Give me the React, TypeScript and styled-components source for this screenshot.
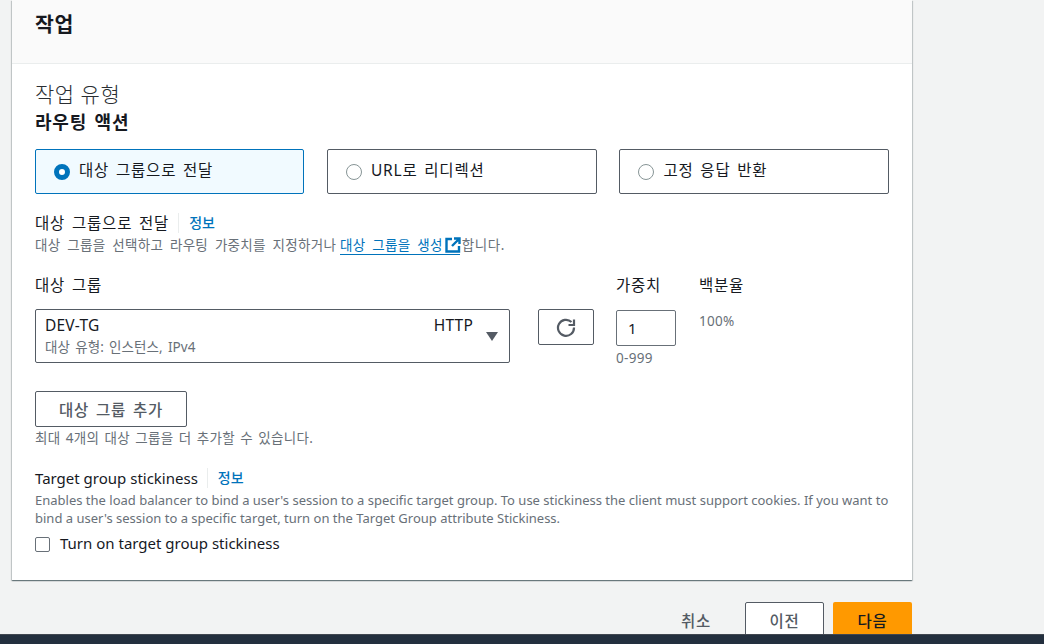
import React from "react";
import styled, { createGlobalStyle } from "styled-components";

const FONT = `"Noto Sans", "Noto Sans CJK KR", sans-serif`;

const GlobalStyle = createGlobalStyle`
  html, body {
    margin: 0;
    height: 100%;
    overflow: hidden;
    background: #f2f3f3;
  }
  * {
    box-sizing: border-box;
  }
  body {
    font-family: ${FONT};
    font-size: 15.5px;
    letter-spacing: 0.8px;
    word-spacing: 2px;
    color: #16191f;
  }
`;

const ExternalIcon = () => (
  <svg width="16" height="16" viewBox="0 0 16 16" fill="none" stroke="#0073bb" strokeWidth="2.4">
    <path d="M7 2H1.5v12.5H14V9" />
    <path d="M9 1.5h5.5V7M14.5 1.5 7 9" />
  </svg>
);

const RefreshIcon = () => (
  <svg width="20" height="20" viewBox="0 0 20 20" fill="none" stroke="#545b64" strokeWidth="2.2">
    <path d="M15.5 5A8 8 0 1 0 18 10.5" />
    <path d="M18 2.5V8h-5.5" />
  </svg>
);

const Info: React.FC = () => <InfoLink>정보</InfoLink>;

const App: React.FC = () => {
  return (
    <>
      <GlobalStyle />
      <Page>
        <Card>
          <CardHeader>
            <h2>작업</h2>
          </CardHeader>
          <CardBody>
            <SectionTitle>작업 유형</SectionTitle>
            <SubTitle>라우팅 액션</SubTitle>

            <Tiles>
              <Tile selected>
                <Radio selected />
                대상 그룹으로 전달
              </Tile>
              <Tile>
                <Radio />
                URL로 리디렉션
              </Tile>
              <Tile>
                <Radio />
                고정 응답 반환
              </Tile>
            </Tiles>

            <FieldLabel>
              대상 그룹으로 전달
              <Info />
            </FieldLabel>
            <Description>
              대상 그룹을 선택하고 라우팅 가중치를 지정하거나{" "}
              <ExternalLink>
                대상 그룹을 생성
                <ExternalIcon />
              </ExternalLink>
              <LinkTail>합니다.</LinkTail>
            </Description>

            <GroupGrid>
              <GroupColumn>
                <ColumnLabel>대상 그룹</ColumnLabel>
                <Select>
                  <SelectText>
                    <SelectRow>
                      <span>DEV-TG</span>
                      <span>HTTP</span>
                    </SelectRow>
                    <SelectHint>대상 유형: 인스턴스, IPv4</SelectHint>
                  </SelectText>
                  <Caret />
                </Select>
              </GroupColumn>
              <RefreshButton>
                <RefreshIcon />
              </RefreshButton>
              <WeightColumn>
                <ColumnLabel>가중치</ColumnLabel>
                <WeightInput>1</WeightInput>
                <WeightRange>0-999</WeightRange>
              </WeightColumn>
              <PercentColumn>
                <ColumnLabel>백분율</ColumnLabel>
                <PercentValue>100%</PercentValue>
              </PercentColumn>
            </GroupGrid>

            <AddButton>대상 그룹 추가</AddButton>
            <Hint>최대 4개의 대상 그룹을 더 추가할 수 있습니다.</Hint>

            <StickyLabel>
              <span>Target group stickiness</span>
              <Info />
            </StickyLabel>
            <StickyDescription>
              Enables the load balancer to bind a user's session to a specific target group. To use
              stickiness the client must support cookies. If you want to bind a user's session to a
              specific target, turn on the Target Group attribute Stickiness.
            </StickyDescription>
            <CheckRow>
              <CheckBox />
              Turn on target group stickiness
            </CheckRow>
          </CardBody>
        </Card>

        <Actions>
          <CancelButton>취소</CancelButton>
          <PrevButton>이전</PrevButton>
          <NextButton>다음</NextButton>
        </Actions>
        <BottomBar />
      </Page>
    </>
  );
};

const Page = styled.div`
  position: relative;
  height: 644px;
  overflow: hidden;
  padding-left: 12px;
`;

const Card = styled.section`
  width: 900px;
  background: #fff;
  box-shadow: 0 1px 1px 0 rgba(0, 28, 36, 0.4), 1px 1px 1px 0 rgba(0, 28, 36, 0.15),
    -1px 1px 1px 0 rgba(0, 28, 36, 0.15);
`;

const CardHeader = styled.header`
  height: 64px;
  padding: 9px 23px 0;
  background: #fafafa;
  border-bottom: 1px solid #eaeded;
  h2 {
    margin: 0;
    font-size: 20.5px;
    letter-spacing: 0.6px;
    line-height: 30px;
    font-weight: 700;
  }
`;

const CardBody = styled.div`
  padding: 16px 23px 20px;
  height: 516px;
`;

const SectionTitle = styled.div`
  font-size: 21px;
  letter-spacing: 0.5px;
  word-spacing: 0;
  line-height: 28px;
  font-weight: 300;
  color: #2a2e33;
`;

const SubTitle = styled.div`
  font-size: 18px;
  letter-spacing: 0.8px;
  line-height: 30px;
  font-weight: 700;
  margin-top: -1px;
`;

const Tiles = styled.div`
  display: grid;
  grid-template-columns: 269.4px 270px 270px;
  column-gap: 22.5px;
  margin-top: 12px;
`;

const Tile = styled.div<{ selected?: boolean }>`
  display: flex;
  align-items: center;
  gap: 9px;
  height: 45px;
  padding: 0 18px 4px;
  border: 1px solid ${(p) => (p.selected ? "#0073bb" : "#545b64")};
  border-radius: 2px;
  background: ${(p) => (p.selected ? "#f1faff" : "#fff")};
  line-height: 20px;
`;

const Radio = styled.span<{ selected?: boolean }>`
  flex: none;
  width: 16px;
  height: 16px;
  margin-top: 4px;
  border-radius: 50%;
  background: #fff;
  border: ${(p) => (p.selected ? "5px solid #0073bb" : "1px solid #879596")};
`;

const FieldLabel = styled.div`
  display: flex;
  align-items: center;
  margin-top: 19px;
  line-height: 20px;
`;

const InfoLink = styled.a`
  margin-left: 9px;
  padding-left: 10px;
  border-left: 1px solid #eaeded;
  font-size: 14px;
  letter-spacing: 0;
  line-height: 20px;
  font-weight: 500;
  color: #0073bb;
`;

const Description = styled.div`
  margin-top: 3px;
  font-size: 13.5px;
  letter-spacing: 0.3px;
  word-spacing: 3px;
  line-height: 18px;
  color: #687078;
`;

const ExternalLink = styled.a`
  display: inline-flex;
  align-items: center;
  height: 19px;
  margin-left: -3px;
  border-bottom: 1px solid #0073bb;
  color: #0073bb;
  svg {
    margin-left: 2px;
    margin-bottom: 1px;
    margin-right: -1px;
  }
`;

const LinkTail = styled.span`
  margin-left: 2px;
  letter-spacing: 0.6px;
`;

const GroupGrid = styled.div`
  display: flex;
  align-items: flex-start;
  margin-top: 20px;
`;

const GroupColumn = styled.div`
  width: 475px;
`;

const ColumnLabel = styled.div`
  line-height: 20px;
  margin-bottom: 14px;
`;

const Select = styled.div`
  display: flex;
  align-items: center;
  height: 54px;
  padding: 0 11px 0 9px;
  border: 1px solid #545b64;
  border-radius: 2px;
`;

const SelectText = styled.div`
  flex: 1;
  min-width: 0;
`;

const SelectRow = styled.div`
  display: flex;
  justify-content: space-between;
  padding-right: 7px;
  font-size: 15.5px;
  letter-spacing: 0.2px;
  line-height: 20px;
`;

const SelectHint = styled.div`
  margin-top: 2px;
  font-size: 13.5px;
  letter-spacing: 0.1px;
  word-spacing: 1.5px;
  line-height: 20px;
  color: #687078;
`;

const Caret = styled.span`
  flex: none;
  width: 0;
  height: 0;
  border-left: 6px solid transparent;
  border-right: 6px solid transparent;
  border-top: 9px solid #545b64;
  margin-left: 6px;
`;

const RefreshButton = styled.button`
  display: flex;
  align-items: center;
  justify-content: center;
  width: 56px;
  height: 36px;
  margin: 34px 0 0 28px;
  padding: 0;
  border: 1px solid #545b64;
  border-radius: 2px;
  background: #fff;
`;

const WeightColumn = styled.div`
  width: 60px;
  margin-left: 22px;
`;

const WeightInput = styled.div`
  height: 36px;
  padding: 0 11px;
  margin-top: 15px;
  border: 1px solid #687078;
  border-radius: 2px;
  font-size: 15px;
  line-height: 34px;
`;

const Hint = styled.div`
  font-size: 13.5px;
  letter-spacing: 0.3px;
  word-spacing: 1.5px;
  line-height: 18px;
  color: #687078;
  margin-top: 2px;
`;

const WeightRange = styled(Hint)`
  margin-top: 3px;
`;

const PercentColumn = styled.div`
  margin-left: 23px;
`;

const PercentValue = styled.div`
  padding-top: 3px;
  font-size: 13.5px;
  letter-spacing: 0.3px;
  line-height: 18px;
  color: #687078;
`;

const AddButton = styled.button`
  display: block;
  width: 152px;
  height: 36px;
  margin-top: 24px;
  padding: 0;
  border: 1px solid #545b64;
  border-radius: 2px;
  background: #fff;
  font-family: ${FONT};
  font-size: 15.5px;
  letter-spacing: 0.8px;
  word-spacing: 2px;
  font-weight: 500;
  color: #545b64;
`;

const StickyLabel = styled(FieldLabel)`
  margin-top: 21px;
  span {
    font-size: 15px;
    letter-spacing: 0;
    word-spacing: 0;
  }
`;

const StickyDescription = styled.div`
  margin-top: 3px;
  font-size: 13px;
  letter-spacing: 0;
  word-spacing: 0;
  line-height: 18px;
  color: #687078;
`;

const CheckRow = styled.label`
  display: flex;
  align-items: center;
  gap: 10px;
  margin-top: 5px;
  font-size: 15px;
  letter-spacing: 0;
  word-spacing: 0;
  line-height: 22px;
`;

const CheckBox = styled.span`
  flex: none;
  width: 15px;
  height: 15px;
  margin-top: 2px;
  border: 1px solid #687078;
  border-radius: 2px;
`;

const Actions = styled.div`
  display: flex;
  justify-content: flex-end;
  align-items: flex-start;
  width: 900px;
  margin-top: 22px;
`;

const ActionButton = styled.button`
  height: 36px;
  padding: 0;
  border-radius: 2px;
  font-family: ${FONT};
  font-size: 15.5px;
  letter-spacing: 0.8px;
  font-weight: 500;
`;

const CancelButton = styled(ActionButton)`
  width: 58px;
  margin-right: 20px;
  border: none;
  background: transparent;
  color: #545b64;
`;

const PrevButton = styled(ActionButton)`
  width: 79px;
  border: 1px solid #545b64;
  background: #fff;
  color: #545b64;
`;

const NextButton = styled(ActionButton)`
  width: 79px;
  margin-left: 9px;
  border: none;
  background: #ff9900;
  color: #16191f;
`;

const BottomBar = styled.div`
  position: absolute;
  left: 0;
  right: 0;
  top: 634px;
  height: 10px;
  background: #232f3e;
  border-top: 1px solid #414750;
`;

export default App;
